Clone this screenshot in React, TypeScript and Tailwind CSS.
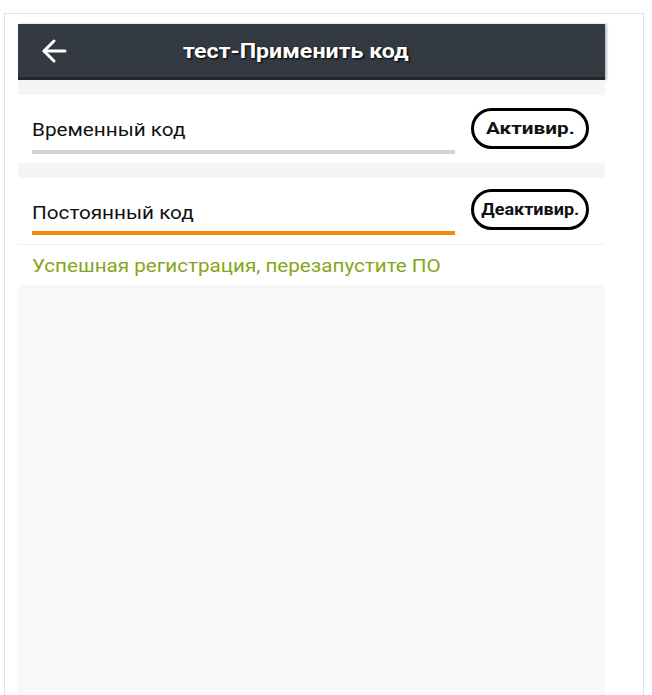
import React from 'react';

const codes = [
  { label: 'Временный код', action: 'Активир.', stretch: 'scale-x-[1.22]', line: 'bg-[#d3d3d3]', btnTop: 'mt-[13px]', rowH: 'h-[68px]' },
  { label: 'Постоянный код', action: 'Деактивир.', stretch: 'scale-x-[1.06]', line: 'bg-[#f08c0a]', btnTop: 'mt-[11px]', rowH: 'h-[67px]' },
];

const App = () => {
  return (
    <div className="h-[695px] overflow-hidden bg-white font-['Roboto',sans-serif]">
      <div className="ml-[4px] mt-[13px] flex h-[682px] w-[640px] flex-col border border-b-0 border-[#e2e2e2] pl-[13px] pt-[10px]">
        <div className="flex h-[671px] w-[587px] flex-col">
          {/* header */}
          <div className="flex h-[56px] items-center border-b-[3px] border-[#22262b] bg-[#343a42] pl-[23px] shadow-[2px_0_2px_rgba(0,0,0,0.25)]">
            <svg width="26" height="26" viewBox="0 0 26 26" fill="none" stroke="white" strokeWidth="3" strokeLinecap="round" strokeLinejoin="round">
              <path d="M24 13H3" />
              <path d="M13 3 3 13l10 10" />
            </svg>
            <h1 className="ml-[116px] inline-block origin-left scale-x-[1.16] text-[20px] font-bold leading-none text-white [text-shadow:1px_1px_2px_#000]">
              тест-Применить код
            </h1>
          </div>

          <div className="h-[15px] bg-[#f5f5f5]" />

          {codes.map((c, i) => (
            <React.Fragment key={c.label}>
              {i > 0 && <div className="h-[15px] bg-[#f5f5f5]" />}
              <div className={`flex items-start bg-white pl-[14px] pr-[16px] ${c.rowH} ${i === 1 ? 'border-b border-[#f0f0f0]' : ''}`}>
                <div className="w-[423px] pt-[23px]">
                  <div className="origin-left scale-x-[1.15] text-[18px] leading-6 text-[#111]">{c.label}</div>
                  <div className={`h-[4px] ${c.line} ${i === 0 ? 'mt-[8px]' : 'mt-[6px]'}`} />
                </div>
                <button
                  className={`ml-auto flex h-[41px] w-[118px] items-center justify-center rounded-full border-[3px] border-black bg-white text-[17px] font-bold text-[#111] ${c.btnTop}`}
                >
                  <span className={`inline-block ${c.stretch}`}>{c.action}</span>
                </button>
              </div>
            </React.Fragment>
          ))}

          <div className="h-[40px] bg-white pl-[14px] pt-[9px]">
            <div className="origin-left scale-x-[1.146] text-[18px] leading-6 text-[#86a61a]">
              Успешная регистрация, перезапустите ПО
            </div>
          </div>

          <div className="flex-1 bg-[#f8f8f8]" />
        </div>
      </div>
    </div>
  );
};

export default App;
